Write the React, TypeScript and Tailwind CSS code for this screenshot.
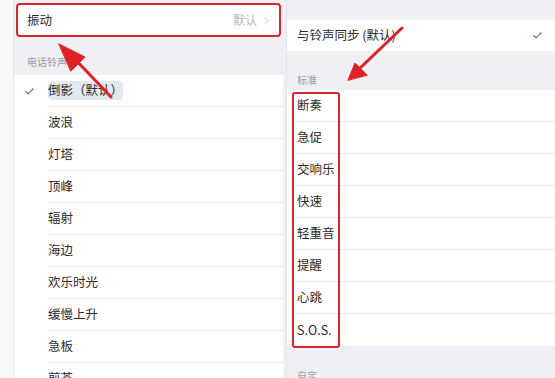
import { Check, ChevronRight } from "lucide-react";

const LEFT_TONES = [
  "倒影（默认）",
  "波浪",
  "灯塔",
  "顶峰",
  "辐射",
  "海边",
  "欢乐时光",
  "缓慢上升",
  "急板",
  "煎茶",
];

const RIGHT_TONES = ["断奏", "急促", "交响乐", "快速", "轻重音", "提醒", "心跳", "S.O.S."];

const font = { fontFamily: '"Noto Sans CJK SC", "Noto Sans", sans-serif' };

export default function App() {
  return (
    <div
      className="relative flex w-[555px] h-[378px] overflow-hidden bg-[#efeff4] text-[#2a2a2a]"
      style={font}
    >
      {/* left edge */}
      <div className="w-[14px] shrink-0 bg-[#f9f9f9] border-r border-[#e4e4e8]" />

      {/* left column: ringtones */}
      <div className="w-[269px] shrink-0 flex flex-col pt-[3px]">
        <div className="h-[34px] shrink-0 mx-[2px] flex items-center justify-between bg-white border-2 border-[#d8262e] rounded-[4px] pl-[9px] pr-[6px]">
          <span className="text-[12.5px]">振动</span>
          <span className="flex items-center gap-[3px] text-[12px] text-[#b8b8bc]">
            默认
            <ChevronRight size={13} strokeWidth={1.5} />
          </span>
        </div>
        <div className="h-[38px] shrink-0 flex items-end pb-[6px] pl-[13px] text-[10px] text-[#9a9aa0]">
          电话铃声
        </div>
        <div className="bg-white shrink-0">
          {LEFT_TONES.map((t, i) => (
            <div key={t} className="h-[32px] flex items-center">
              <div className="w-[34px] shrink-0 flex justify-end pr-[13px]">
                {i === 0 && <Check size={11} strokeWidth={2.5} className="text-[#5a76a8]" />}
              </div>
              <div className="flex-1 h-full flex items-center border-b border-[#ececf0]">
                <span
                  className={`text-[12.5px] ${i === 0 ? "bg-[#e3e9f1] rounded-sm" : ""}`}
                >
                  {t}
                </span>
              </div>
            </div>
          ))}
        </div>
      </div>

      {/* right column: vibration patterns */}
      <div className="w-[270px] ml-[3px] shrink-0 flex flex-col border-l border-[#e4e4e8]">
        <div className="h-[20px] shrink-0" />
        <div className="h-[31px] shrink-0 bg-white flex items-center justify-between pl-[10px] pr-[13px]">
          <span className="text-[12.5px]">与铃声同步 (默认)</span>
          <Check size={11} strokeWidth={2.5} className="text-[#5a76a8]" />
        </div>
        <div className="h-[39px] shrink-0 flex items-end pb-[3px] pl-[10px] text-[10px] text-[#9a9aa0]">
          标准
        </div>
        <div className="bg-white shrink-0">
          {RIGHT_TONES.map((t, i) => (
            <div key={t} className="h-[32px] pl-[10px]">
              <div
                className={`h-full flex items-center text-[12.5px] ${
                  i < RIGHT_TONES.length - 1 ? "border-b border-[#ececf0]" : ""
                }`}
              >
                {t}
              </div>
            </div>
          ))}
        </div>
        <div className="h-[22px] shrink-0" />
        <div className="shrink-0 pl-[10px] text-[10px] text-[#9a9aa0]">自定</div>
      </div>

      <div className="flex-1 bg-[#efeff4]" />

      {/* red box around the standard list */}
      <div className="absolute left-[292px] top-[92px] w-[48px] h-[256px] border-2 border-[#d8262e] rounded-[3px]" />

      {/* arrows */}
      <svg className="absolute inset-0 pointer-events-none" width="555" height="378">
        <g stroke="#e02027" strokeWidth="3" strokeLinecap="round" fill="#e02027">
          <line x1="111" y1="97" x2="72" y2="56" />
          <polygon points="59,44 85,57 71,71" strokeWidth="1" strokeLinejoin="round" />
          <line x1="402" y1="28" x2="358" y2="70" />
          <polygon points="348,80 355,63 367,75" strokeWidth="1" strokeLinejoin="round" />
        </g>
      </svg>
    </div>
  );
}
